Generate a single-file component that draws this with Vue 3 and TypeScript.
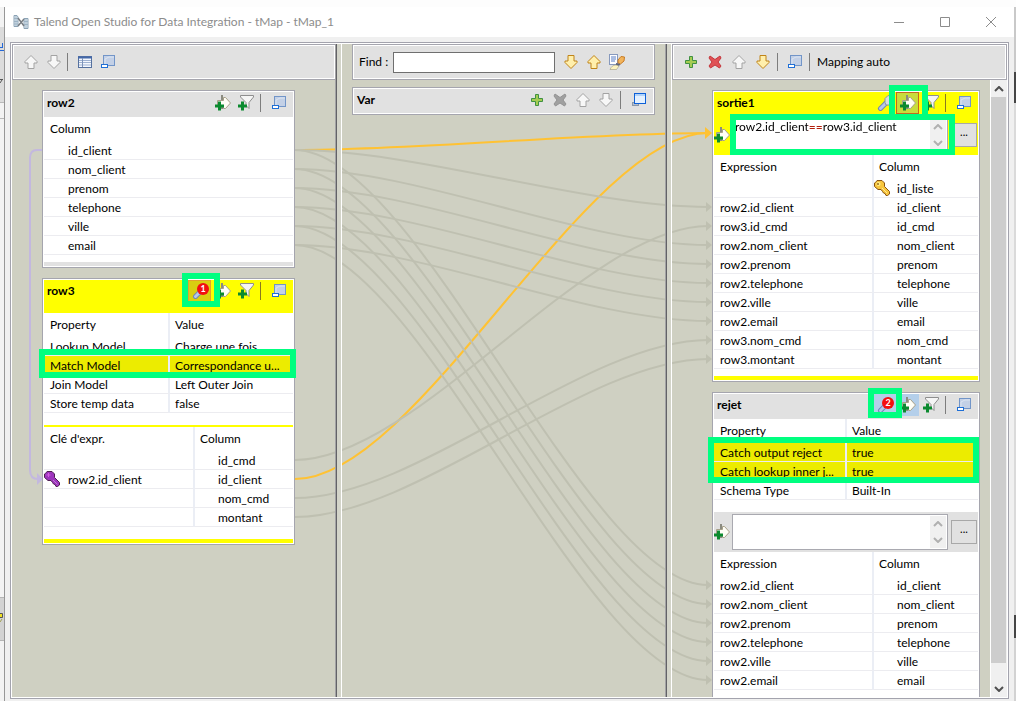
<script setup lang="ts">
interface Link { from: number; to: number }

const row2Columns: string[] = ['id_client', 'nom_client', 'prenom', 'telephone', 'ville', 'email']

const row3Properties: { name: string; value: string; marked?: boolean }[] = [
  { name: 'Lookup Model', value: 'Charge une fois' },
  { name: 'Match Model', value: 'Correspondance u...', marked: true },
  { name: 'Join Model', value: 'Left Outer Join' },
  { name: 'Store temp data', value: 'false' },
]

const row3Columns: { expr: string; column: string }[] = [
  { expr: '', column: 'id_cmd' },
  { expr: 'row2.id_client', column: 'id_client' },
  { expr: '', column: 'nom_cmd' },
  { expr: '', column: 'montant' },
]

const sortieColumns: { expr: string; column: string; key?: boolean }[] = [
  { expr: '', column: 'id_liste', key: true },
  { expr: 'row2.id_client', column: 'id_client' },
  { expr: 'row3.id_cmd', column: 'id_cmd' },
  { expr: 'row2.nom_client', column: 'nom_client' },
  { expr: 'row2.prenom', column: 'prenom' },
  { expr: 'row2.telephone', column: 'telephone' },
  { expr: 'row2.ville', column: 'ville' },
  { expr: 'row2.email', column: 'email' },
  { expr: 'row3.nom_cmd', column: 'nom_cmd' },
  { expr: 'row3.montant', column: 'montant' },
]

const rejetProperties: { name: string; value: string; marked?: boolean }[] = [
  { name: 'Catch output reject', value: 'true', marked: true },
  { name: 'Catch lookup inner j...', value: 'true', marked: true },
  { name: 'Schema Type', value: 'Built-In' },
]

const links: Link[] = [
  { from: 150, to: 207 }, { from: 169, to: 245 }, { from: 188, to: 264 },
  { from: 207, to: 283 }, { from: 226, to: 302 }, { from: 245, to: 321 },
  { from: 460, to: 226 }, { from: 498, to: 340 }, { from: 517, to: 359 },
  { from: 150, to: 585 }, { from: 169, to: 604 }, { from: 188, to: 623 },
  { from: 207, to: 642 }, { from: 226, to: 661 }, { from: 245, to: 680 },
]
const activeLinks: Link[] = [{ from: 150, to: 133 }, { from: 479, to: 133 }]

const curve = (l: Link): string => `M295 ${l.from}C417 ${l.from} 586 ${l.to} 708 ${l.to}`
const head = (l: Link): string => `M706 ${l.to - 5}L712 ${l.to}L706 ${l.to + 5}Z`
</script>

<template>
  <div class="desktop">
    <svg class="sprites" aria-hidden="true">
      <defs>
        <symbol id="i-up" viewBox="0 0 16 16"><path d="M8 1.5 14 7.5V9H11V14.5H5V9H2V7.5Z" fill="#f7f7f7" stroke="#a3a3a3" /></symbol>
        <symbol id="i-down" viewBox="0 0 16 16"><path d="M8 14.5 2 8.500V7H5V1.500H11V7H14V8.500Z" fill="#f7f7f7" stroke="#a3a3a3" /></symbol>
        <symbol id="i-up-gold" viewBox="0 0 16 16"><path d="M8 1.5 14 7.5V9H11V14.5H5V9H2V7.5Z" fill="#ffefac" stroke="#c08418" /></symbol>
        <symbol id="i-down-gold" viewBox="0 0 16 16"><path d="M8 14.5 2 8.500V7H5V1.500H11V7H14V8.500Z" fill="#ffefac" stroke="#c08418" /></symbol>
        <symbol id="i-table" viewBox="0 0 16 16">
          <rect x="1.500" y="2.500" width="13" height="11" fill="#f4f7fd" stroke="#56719f" />
          <path d="M1 3.500H15" stroke="#4468a8" stroke-width="2" /><path d="M2 6.500H14M2 8.500H14M2 11H14" stroke="#9fb2d2" /><path d="M5.500 4V13" stroke="#7d93ba" />
        </symbol>
        <symbol id="i-window" viewBox="0 0 16 16">
          <rect x="3.500" y="1.500" width="11" height="10" fill="#c3d0e6" stroke="#7295c8" /><path d="M5 10V5L9 3H14" fill="none" stroke="#dce5f2" />
          <rect x="1.500" y="10.500" width="6" height="3" fill="#fff" stroke="#1f6fd6" />
        </symbol>
        <symbol id="i-window-on" viewBox="0 0 16 16">
          <rect x="1.500" y="10.500" width="6" height="3" fill="#b5bfcd" stroke="#8997ab" />
          <rect x="3.500" y="1.500" width="11" height="10" fill="#e4f1ff" stroke="#0d60d8" /><path d="M4 3H14" stroke="#7fb4f4" />
        </symbol>
        <symbol id="i-plus" viewBox="0 0 16 16"><path d="M6.500 2.500H9.500V6.500H13.500V9.500H9.500V13.500H6.500V9.500H2.500V6.500H6.500Z" fill="#a5cc52" stroke="#3f9142" /></symbol>
        <symbol id="i-cross" viewBox="0 0 16 16"><path d="M3 2 8 5.500 13 2 14 4 11 8 14 12 12.500 14 8 11 3.500 14 2 12 5 8 2 4Z" fill="#e05256" stroke="#c4373d" /></symbol>
        <symbol id="i-cross-off" viewBox="0 0 16 16"><path d="M3 2 8 5.500 13 2 14 4 11 8 14 12 12.500 14 8 11 3.500 14 2 12 5 8 2 4Z" fill="#a0a0a0" stroke="#939393" /></symbol>
        <symbol id="i-add-expr" viewBox="0 0 16 16">
          <path d="M7 0V14" stroke="#8b8b80" stroke-width="2" />
          <path d="M2.500 5.500H8.500V2.500L10.500 2.500 15.500 8 10.500 13.500H8.500V10.500H2.500Z" fill="#fffef6" stroke="#a7a08a" />
          <path d="M4.500 6.500V15.500M0 11H9" stroke="#0b8a2f" stroke-width="3" />
        </symbol>
        <symbol id="i-add-filter" viewBox="0 0 16 16">
          <path d="M2.500 .5H15.500V2L11 7.500V13.500L8 10.500V7.500L2.500 2Z" fill="#f5f5f5" stroke="#8e8e8e" />
          <path d="M4.500 6.500V15.500M0 11H9" stroke="#0b8a2f" stroke-width="3" />
        </symbol>
        <symbol id="i-wrench" viewBox="0 0 16 16">
          <path d="M9 8 3.500 13.500" stroke="#6f86b8" stroke-width="5" stroke-linecap="round" /><path d="M9 8 3.500 13.500" stroke="#b7c7ea" stroke-width="3" stroke-linecap="round" />
          <path d="M8 7.500V3.500L11 .5 12.500 1V4L15 5V7L12 10H9Z" fill="#d9dde4" stroke="#8d929c" />
        </symbol>
        <symbol id="i-key" viewBox="0 0 16 16">
          <path d="M1.500 2.500 3 .5H8L10.500 3V6.500L15.500 11.500V14L13.500 15.500H12L11 13.500 9.500 13 8.500 11.500 7 9.500H4L.5 6.500V3Z" fill="#f8c63d" stroke="#8a5512" />
          <path d="M8 8 13 13" stroke="#fbe79a" stroke-width="1" /><circle cx="4.500" cy="4" r="2" fill="#fff08e" /><circle cx="4" cy="4" r="1" fill="#9d6a18" />
        </symbol>
        <symbol id="i-key-purple" viewBox="0 0 16 16">
          <path d="M1.500 2.500 3 .5H8L10.500 3V6.500L15.500 11.500V14L13.500 15.500H12L11 13.500 9.500 13 8.500 11.500 7 9.500H4L.5 6.500V3Z" fill="#9d35bd" stroke="#502052" />
          <path d="M9 9 13.500 13.500" stroke="#c178d4" /><path d="M2.500 4H6.500M4.500 2V6" stroke="#d65de4" />
        </symbol>
        <symbol id="i-highlight" viewBox="0 0 16 16">
          <rect x=".5" y=".5" width="8" height="10" fill="#fdfdff" stroke="#8799bd" /><path d="M2 3H7M2 5H7M2 7H6" stroke="#5a7fc4" />
          <path d="M9 6 12 2.500 15.500 3 15 7 11.500 10 9 9Z" fill="#f2b45c" stroke="#c77b25" />
          <path d="M7 9 11.500 10 10 12 7 11Z" fill="#60647a" /><path d="M1 15.500C2 13 4 11 7 11L10 12 7.500 15.500Z" fill="#fdf3bf" stroke="#8f8a72" stroke-width=".5" />
        </symbol>
      </defs>
    </svg>

    <div class="behind">
      <svg width="4" height="694" viewBox="0 7 4 694" aria-hidden="true">
        <path d="M0 27H4V102H0Z" fill="#dcdcdc" /><path d="M0 102.500H4M0 118.500H4" stroke="#b9b9b9" />
        <path d="M2.500 43V48M0 47.500H2.500M0 50.500H4" stroke="#2468d8" /><path d="M0 79.500H3M2 80 0 83" stroke="#555" fill="none" />
        <path d="M0 597H4V640H0Z" fill="#d3d3d3" /><path d="M0 597.500H4M0 640.500H4" stroke="#b5b5b5" />
        <path d="M0 613.500H2.500V617.500H0" stroke="#555" fill="#f0e020" /><path d="M0 622 2 619" stroke="#a0a050" />
      </svg>
    </div>

    <main class="window">
      <header class="titlebar">
        <svg class="logo" viewBox="0 0 16 16" aria-hidden="true">
          <path d="M1 1.500H4L5 3V12.500H1ZM11 4.500H15V14.500H11Z" fill="#e3edf5" stroke="#8ba2b4" />
          <path d="M1 4.500H5M1 7.500H5M1 10H5M11 7.500H15M11 10.500H15M13 5V14M3 2V12" stroke="#9db3c4" />
          <path d="M5 4 11 12M5 12 11 5" stroke="#777d83" stroke-width="1.500" />
        </svg>
        <h1>Talend Open Studio for Data Integration - tMap - tMap_1</h1>
        <div class="controls">
          <button aria-label="Minimize"><svg width="12" height="12"><path d="M1 6.500H11" /></svg></button>
          <button aria-label="Maximize"><svg width="12" height="12"><path d="M1.500 1.500H10.500V10.500H1.500Z" /></svg></button>
          <button aria-label="Close"><svg width="12" height="12"><path d="M1 1 11 11M11 1 1 11" /></svg></button>
        </div>
      </header>

      <section class="frame">
        <div class="workspace">
          <svg class="links" viewBox="12 44 995 653" preserveAspectRatio="none" aria-hidden="true">
            <g class="link link-active">
              <path v-for="(l, i) in activeLinks" :key="i" :d="curve(l)" />
            </g>
            <g class="link">
              <path v-for="(l, i) in links" :key="i" :d="curve(l)" />
            </g>
            <g class="link-heads">
              <path v-for="(l, i) in links" :key="i" :d="head(l)" />
            </g>
            <path class="head-active" d="M705 127L712 133L705 139Z" />
            <path class="lookup" d="M42 150H37Q30 150 30 158V470Q30 479 38 479" />
            <path class="lookup-head" d="M37 473L43 479L37 485Z" />
          </svg>

          <div class="pane">
            <div class="toolbar">
              <button aria-label="Move up"><svg><use href="#i-up" /></svg></button>
              <button aria-label="Move down"><svg><use href="#i-down" /></svg></button>
              <i class="sep"></i>
              <button aria-label="Table view"><svg><use href="#i-table" /></svg></button>
              <button aria-label="Minimize tables"><svg><use href="#i-window" /></svg></button>
            </div>
            <div class="cards cards-in">
              <article class="card">
                <header class="card-head">
                  <h2>row2</h2>
                  <button aria-label="Add expression"><svg><use href="#i-add-expr" /></svg></button>
                  <button aria-label="Add filter"><svg><use href="#i-add-filter" /></svg></button>
                  <i class="sep"></i>
                  <button aria-label="Minimize"><svg><use href="#i-window" /></svg></button>
                </header>
                <table>
                  <thead><tr><th>Column</th></tr></thead>
                  <tbody>
                    <tr v-for="c in row2Columns" :key="c"><td class="deep">{{ c }}</td></tr>
                  </tbody>
                </table>
                <div class="foot"></div>
              </article>

              <article class="card selected">
                <header class="card-head tall">
                  <h2>row3</h2>
                  <button class="pressed" aria-label="Settings"><svg><use href="#i-wrench" /></svg><span class="badge">1</span></button>
                  <button aria-label="Add expression"><svg><use href="#i-add-expr" /></svg></button>
                  <button aria-label="Add filter"><svg><use href="#i-add-filter" /></svg></button>
                  <i class="sep"></i>
                  <button aria-label="Minimize"><svg><use href="#i-window" /></svg></button>
                </header>
                <table class="split split-126">
                  <thead><tr><th>Property</th><th>Value</th></tr></thead>
                  <tbody>
                    <tr v-for="p in row3Properties" :key="p.name" :class="{ marked: p.marked }">
                      <td>{{ p.name }}</td><td class="flush">{{ p.value }}</td>
                    </tr>
                  </tbody>
                </table>
                <div class="divider"></div>
                <table class="split split-151">
                  <thead><tr><th>Clé d'expr.</th><th>Column</th></tr></thead>
                  <tbody>
                    <tr v-for="c in row3Columns" :key="c.column">
                      <td class="deep"><svg v-if="c.expr" class="key"><use href="#i-key-purple" /></svg>{{ c.expr }}</td>
                      <td>{{ c.column }}</td>
                    </tr>
                  </tbody>
                </table>
                <div class="foot far"></div>
                <span class="mark mark-wrench"></span>
                <span class="mark mark-match"></span>
              </article>
            </div>
          </div>

          <div class="sash"></div>

          <div class="pane pane-mid">
            <div class="toolbar">
              <label for="find">Find :</label>
              <input id="find" type="text" />
              <button aria-label="Find next"><svg><use href="#i-down-gold" /></svg></button>
              <button aria-label="Find previous"><svg><use href="#i-up-gold" /></svg></button>
              <button aria-label="Highlight all"><svg><use href="#i-highlight" /></svg></button>
            </div>
            <article class="card var">
              <header class="card-head">
                <h2>Var</h2>
                <button aria-label="Add variable"><svg><use href="#i-plus" /></svg></button>
                <button aria-label="Remove variable"><svg><use href="#i-cross-off" /></svg></button>
                <button aria-label="Move up"><svg><use href="#i-up" /></svg></button>
                <button aria-label="Move down"><svg><use href="#i-down" /></svg></button>
                <i class="sep"></i>
                <button aria-label="Restore"><svg><use href="#i-window-on" /></svg></button>
              </header>
            </article>
          </div>

          <div class="sash"></div>

          <div class="pane">
            <div class="toolbar wide">
              <button aria-label="Add output table"><svg><use href="#i-plus" /></svg></button>
              <button aria-label="Remove output table"><svg><use href="#i-cross" /></svg></button>
              <button aria-label="Move up"><svg><use href="#i-up" /></svg></button>
              <button aria-label="Move down"><svg><use href="#i-down-gold" /></svg></button>
              <i class="sep"></i>
              <button aria-label="Minimize tables"><svg><use href="#i-window" /></svg></button>
              <i class="sep"></i>
              <button class="text">Mapping auto</button>
            </div>
            <div class="scroller">
              <div class="cards cards-out">
                <article class="card selected">
                  <header class="card-head short">
                    <h2>sortie1</h2>
                    <button aria-label="Settings"><svg><use href="#i-wrench" /></svg></button>
                    <button class="pressed olive" aria-label="Add expression"><svg><use href="#i-add-expr" /></svg></button>
                    <button aria-label="Add filter"><svg><use href="#i-add-filter" /></svg></button>
                    <i class="sep"></i>
                    <button aria-label="Minimize"><svg><use href="#i-window" /></svg></button>
                  </header>
                  <div class="filter">
                    <svg class="filter-icon"><use href="#i-add-expr" /></svg>
                    <div class="editor">
                      <textarea class="code" aria-label="sortie1 filter" spellcheck="false">row2.id_client==row3.id_client</textarea>
                      <div class="spin">
                        <svg viewBox="0 0 10 6"><path d="M1 5 5 1 9 5" /></svg>
                        <svg viewBox="0 0 10 6"><path d="M1 1 5 5 9 1" /></svg>
                      </div>
                    </div>
                    <button class="more" aria-label="Open expression builder">...</button>
                  </div>
                  <table class="split split-160">
                    <thead><tr><th>Expression</th><th>Column</th></tr></thead>
                    <tbody>
                      <tr v-for="c in sortieColumns" :key="c.column">
                        <td>{{ c.expr }}</td>
                        <td><svg v-if="c.key" class="key"><use href="#i-key" /></svg>{{ c.column }}</td>
                      </tr>
                    </tbody>
                  </table>
                  <div class="foot"></div>
                  <span class="mark mark-expr"></span>
                  <span class="mark mark-filter"></span>
                </article>

                <article class="card">
                  <header class="card-head">
                    <h2>rejet</h2>
                    <button class="lit" aria-label="Settings"><svg><use href="#i-wrench" /></svg><span class="badge">2</span></button>
                    <button class="lit" aria-label="Add expression"><svg><use href="#i-add-expr" /></svg></button>
                    <button aria-label="Add filter"><svg><use href="#i-add-filter" /></svg></button>
                    <i class="sep"></i>
                    <button aria-label="Minimize"><svg><use href="#i-window" /></svg></button>
                  </header>
                  <table class="split split-133">
                    <thead><tr><th>Property</th><th>Value</th></tr></thead>
                    <tbody>
                      <tr v-for="p in rejetProperties" :key="p.name" :class="{ marked: p.marked }">
                        <td>{{ p.name }}</td><td class="flush">{{ p.value }}</td>
                      </tr>
                    </tbody>
                  </table>
                  <div class="filter spaced">
                    <svg class="filter-icon"><use href="#i-add-expr" /></svg>
                    <div class="editor">
                      <textarea aria-label="rejet filter"></textarea>
                      <div class="spin">
                        <svg viewBox="0 0 10 6"><path d="M1 5 5 1 9 5" /></svg>
                        <svg viewBox="0 0 10 6"><path d="M1 1 5 5 9 1" /></svg>
                      </div>
                    </div>
                    <button class="more" aria-label="Open expression builder">...</button>
                  </div>
                  <table class="split split-160">
                    <thead><tr><th>Expression</th><th>Column</th></tr></thead>
                    <tbody>
                      <tr v-for="c in row2Columns" :key="c"><td>row2.{{ c }}</td><td>{{ c }}</td></tr>
                    </tbody>
                  </table>
                  <div class="foot"></div>
                  <span class="mark mark-reject"></span>
                  <span class="mark mark-catch"></span>
                </article>
              </div>
              <div class="scrollbar">
                <button aria-label="Scroll up"><svg viewBox="0 0 10 6"><path d="M1 5 5 1 9 5" /></svg></button>
                <div class="track"><div class="thumb"></div></div>
                <button aria-label="Scroll down"><svg viewBox="0 0 10 6"><path d="M1 1 5 5 9 1" /></svg></button>
              </div>
            </div>
          </div>
        </div>
      </section>
    </main>

    <div class="behind behind-right"></div>
  </div>
</template>

<style>
body { margin: 0; background: #fdfdfd; }
</style>

<style scoped>
.desktop {
  box-sizing: border-box;
  height: 100vh;
  padding-top: 7px;
  display: grid;
  grid-template-columns: 4px 1fr 2px;
  overflow: hidden;
  color: #000;
  font: 12px/16px Lato, "Open Sans", sans-serif;
}
.desktop *, .desktop *::before { box-sizing: border-box; }
.sprites { position: absolute; width: 0; height: 0; }
.behind { background: #f3f3f3; overflow: hidden; }
.behind svg { display: block; }
.behind-right {
  background: linear-gradient(#c9c9c9 0 65px, #454545 65px 96px, #dadada 96px 608px, #454545 608px 631px, #d2d2d2 631px);
}
button { padding: 0; border: 0; background: none; font: inherit; color: inherit; }
h1, h2 { margin: 0; font-size: 12px; line-height: 16px; }

.window {
  min-width: 0;
  min-height: 0;
  display: flex;
  flex-direction: column;
  border-left: 1px solid #979797;
  background: #f0f0f0;
}
.titlebar { display: flex; align-items: center; height: 30px; padding-left: 8px; background: #fff; }
.logo { width: 16px; height: 16px; margin-right: 5px; }
h1 { flex: 1; font-weight: 400; color: #8c8c8c; }
.controls { display: flex; }
.controls button { width: 46px; height: 28px; display: grid; place-items: center; }
.controls path { fill: none; stroke: #8c8c8c; }

.frame {
  flex: 1;
  min-height: 0;
  display: flex;
  margin: 5px 5px 2px;
  padding: 1px;
  border: 1px solid #a3a3ad;
  background: #fff;
}
.workspace {
  position: relative;
  flex: 1;
  display: grid;
  grid-template-columns: 324fr 6px 324fr 6px 335fr;
  background: #cfd0c2;
}
.links { position: absolute; inset: 0; width: 100%; height: 100%; }
.link path { fill: none; stroke: #bfc0b1; stroke-width: 2; }
.link-heads path { fill: #bfc0b1; }
.link-active path { stroke: #ffc233; }
.head-active { fill: #ffc233; }
.lookup { fill: none; stroke: #c3b8df; stroke-width: 2; }
.lookup-head { fill: #c3b8df; }

.pane { position: relative; min-width: 0; min-height: 0; display: flex; flex-direction: column; }
.pane-mid { padding: 0 11px 0 10px; }
.sash {
  position: relative;
  border-left: 1px solid #626266;
  border-right: 1px solid #fff;
  background: #d3d4c9;
  box-shadow: -1px 0 #a2a2a4;
}

.toolbar, .card { border: 1px solid #a5a5ae; background: #fff; padding: 1px; }
.toolbar {
  display: flex;
  align-items: center;
  height: 36px;
  padding-left: 6px;
  background: #e1e1e1;
  box-shadow: inset 0 0 0 1px #fff;
}
.toolbar button, .card-head button {
  position: relative;
  flex: none;
  width: 23px;
  height: 22px;
  display: grid;
  place-items: center;
}
.toolbar.wide button { width: 24px; }
.toolbar.wide .text { width: auto; margin-left: 2px; }
.toolbar svg, .card-head svg { width: 16px; height: 16px; }
.toolbar label { width: 34px; }
.toolbar input {
  flex: 1;
  min-width: 0;
  max-width: 162px;
  height: 21px;
  margin-right: 4px;
  border: 1px solid #6f6f6f;
  background: #fff;
  font: inherit;
}
.sep { flex: none; width: 1px; height: 18px; background: #7d7d7d; margin: 0 5px 0 2px; }

.cards { display: flex; flex-direction: column; gap: 10px; }
.cards-in { padding: 10px 41px 0 30px; }
.cards-out { flex: 1; min-width: 0; padding: 10px 10px 0 40px; overflow: hidden; }
.card { position: relative; flex: none; }
.card-head { display: flex; align-items: center; padding: 0 3px 3px; background: #e1e1e1; }
.card-head h2 { flex: 1; font-weight: 700; }
.card-head .sep { margin: 0 6px 0 3px; }
.card-head.tall { padding-bottom: 11px; }
.card-head.short { padding-bottom: 1px; }
.selected .card-head, .selected .filter, .selected .foot { background: #ff0; }
.selected .sep { background: #8a7a20; }
.var { margin-top: 7px; }
.var .card-head { padding-bottom: 2px; }
.pressed { border: 1px solid #e2a32c; background: #d9cf10; }
.pressed.olive { background: #c8dc3c; border-color: #c46a1e; }
.lit { background: #b4cfea; }
.badge {
  position: absolute;
  left: 9px;
  top: 3px;
  width: 12px;
  height: 12px;
  border-radius: 50%;
  background: #f30f0f;
  color: #fff;
  font-size: 9px;
  font-weight: 700;
  line-height: 12px;
  text-align: center;
}
.pressed .badge { left: 8px; top: 2px; }

table { width: 100%; border-collapse: separate; border-spacing: 0; table-layout: fixed; background: #fff; }
th, td { position: relative; padding: 0 0 0 6px; text-align: left; font-weight: 400; white-space: nowrap; overflow: hidden; }
th { height: 24px; }
td { height: 19px; padding-top: 1px; border-bottom: 1px solid #ececf0; line-height: 17px; }
td.deep { padding-left: 24px; }
.split th + th, .split td.flush { padding-left: 5px; }
.split td + td { padding-left: 23px; }
.split td + td.flush { padding-left: 5px; }
.split th:first-child, .split td:first-child { border-right: 2px solid #ebeef5; }
.split-126 th:first-child { width: 126px; }
.split-133 th:first-child { width: 133px; }
.split-151 th:first-child { width: 151px; }
.split-160 th:first-child { width: 160px; }
.marked td { background: #ecec00; }
.key { position: absolute; left: 0; top: 1px; width: 16px; height: 16px; }
.divider { height: 14px; border-bottom: 2px solid #ff0; }
.foot { height: 4px; margin-top: 7px; background: #e1e1e1; }
.foot.far { margin-top: 12px; }

.filter { display: flex; height: 40px; padding: 2px 1px 2px 0; background: #e1e1e1; }
.spaced { margin-top: 12px; }
.filter-icon { flex: none; width: 16px; height: 16px; margin: 10px 2px 0 0; }
.editor { flex: 1; min-width: 0; display: flex; border: 1px solid #a9a9b0; padding: 1px; background: #fff; }
textarea {
  flex: 1;
  min-width: 0;
  border: 0;
  padding: 0 0 0 1px;
  resize: none;
  outline: 0;
  overflow: hidden;
  background: none;
  font: inherit;
}
.code {
  background: linear-gradient(90deg, #000 74px, #b3200c 74px 88px, #000 88px);
  background-clip: text;
  -webkit-background-clip: text;
  -webkit-text-fill-color: transparent;
}
.spin { width: 16px; display: flex; flex-direction: column; justify-content: space-between; align-items: center; padding: 5px 0; background: #f0f0f0; }
.spin svg { width: 10px; height: 6px; }
.spin path { fill: none; stroke: #b0b0b0; stroke-width: 2; }
.more { flex: none; width: 26px; height: 24px; margin: 6px 0 0 3px; border: 1px solid #a8a8a8; background: #e1e1e1; font-size: 11px; line-height: 12px; padding-bottom: 7px; }

.scroller { flex: 1; min-height: 0; display: flex; }
.scrollbar { flex: none; width: 17px; display: flex; flex-direction: column; background: #f0f0f0; border-left: 1px solid #fff; }
.scrollbar button { height: 17px; display: grid; place-items: center; }
.scrollbar svg { width: 10px; height: 6px; }
.scrollbar path { fill: none; stroke: #505050; stroke-width: 2; }
.track { flex: 1; }
.thumb { height: 97%; background: #cdcdcd; margin-right: 1px; }

.mark { position: absolute; border: 6px solid #00ff80; pointer-events: none; }
.mark-wrench { top: -6px; right: 74px; width: 38px; height: 34px; }
.mark-match { top: 70px; left: -4px; right: -2px; height: 29px; }
.mark-expr { top: -6px; right: 51px; width: 39px; height: 35px; }
.mark-filter { top: 23px; left: 17px; right: 24px; height: 41px; }
.mark-reject { top: -5px; right: 77px; width: 34px; height: 30px; }
.mark-catch { top: 44px; left: -5px; right: 0; height: 46px; }
</style>
